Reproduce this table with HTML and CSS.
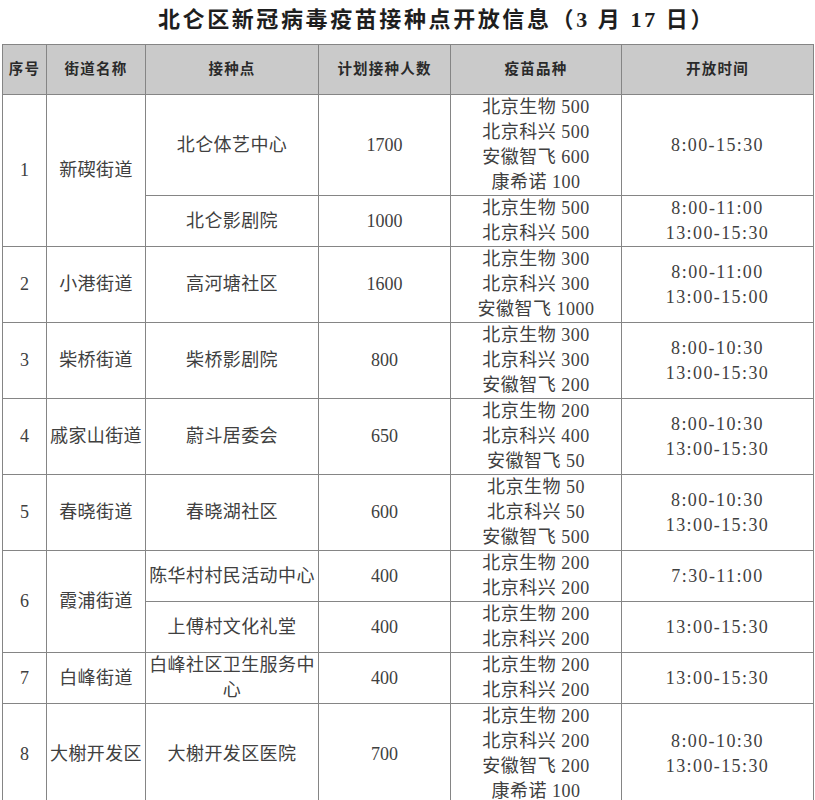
FILE: index.html
```html
<!DOCTYPE html>
<html lang="zh-CN">
<head>
<meta charset="utf-8">
<title>北仑区新冠病毒疫苗接种点开放信息</title>
<link rel="stylesheet" href="styles.css">
</head>
<body>
<h1 class="title">北仑区新冠病毒疫苗接种点开放信息（3 月 17 日）</h1>
<table class="sched">
  <colgroup>
    <col class="c-no"><col class="c-street"><col class="c-site"><col class="c-count"><col class="c-vac"><col class="c-time">
  </colgroup>
  <thead>
    <tr><th>序号</th><th>街道名称</th><th>接种点</th><th>计划接种人数</th><th>疫苗品种</th><th>开放时间</th></tr>
  </thead>
  <tbody>
    <tr>
      <td class="num" rowspan="2">1</td><td class="cjk" rowspan="2">新碶街道</td>
      <td class="cjk">北仑体艺中心</td><td class="num">1700</td>
      <td class="vac">北京生物 500<br>北京科兴 500<br>安徽智飞 600<br>康希诺 100</td>
      <td class="time">8:00-15:30</td>
    </tr>
    <tr>
      <td class="cjk">北仑影剧院</td><td class="num">1000</td>
      <td class="vac">北京生物 500<br>北京科兴 500</td>
      <td class="time">8:00-11:00<br>13:00-15:30</td>
    </tr>
    <tr>
      <td class="num">2</td><td class="cjk">小港街道</td>
      <td class="cjk">高河塘社区</td><td class="num">1600</td>
      <td class="vac">北京生物 300<br>北京科兴 300<br>安徽智飞 1000</td>
      <td class="time">8:00-11:00<br>13:00-15:00</td>
    </tr>
    <tr>
      <td class="num">3</td><td class="cjk">柴桥街道</td>
      <td class="cjk">柴桥影剧院</td><td class="num">800</td>
      <td class="vac">北京生物 300<br>北京科兴 300<br>安徽智飞 200</td>
      <td class="time">8:00-10:30<br>13:00-15:30</td>
    </tr>
    <tr>
      <td class="num">4</td><td class="cjk">戚家山街道</td>
      <td class="cjk">蔚斗居委会</td><td class="num">650</td>
      <td class="vac">北京生物 200<br>北京科兴 400<br>安徽智飞 50</td>
      <td class="time">8:00-10:30<br>13:00-15:30</td>
    </tr>
    <tr>
      <td class="num">5</td><td class="cjk">春晓街道</td>
      <td class="cjk">春晓湖社区</td><td class="num">600</td>
      <td class="vac">北京生物 50<br>北京科兴 50<br>安徽智飞 500</td>
      <td class="time">8:00-10:30<br>13:00-15:30</td>
    </tr>
    <tr>
      <td class="num" rowspan="2">6</td><td class="cjk" rowspan="2">霞浦街道</td>
      <td class="cjk">陈华村村民活动中心</td><td class="num">400</td>
      <td class="vac">北京生物 200<br>北京科兴 200</td>
      <td class="time">7:30-11:00</td>
    </tr>
    <tr>
      <td class="cjk">上傅村文化礼堂</td><td class="num">400</td>
      <td class="vac">北京生物 200<br>北京科兴 200</td>
      <td class="time">13:00-15:30</td>
    </tr>
    <tr>
      <td class="num">7</td><td class="cjk">白峰街道</td>
      <td class="cjk">白峰社区卫生服务中心</td><td class="num">400</td>
      <td class="vac">北京生物 200<br>北京科兴 200</td>
      <td class="time">13:00-15:30</td>
    </tr>
    <tr>
      <td class="num">8</td><td class="cjk">大榭开发区</td>
      <td class="cjk">大榭开发区医院</td><td class="num">700</td>
      <td class="vac">北京生物 200<br>北京科兴 200<br>安徽智飞 200<br>康希诺 100</td>
      <td class="time">8:00-10:30<br>13:00-15:30</td>
    </tr>
  </tbody>
</table>
</body>
</html>
```
FILE: styles.css
```css
html, body {
  margin: 0;
  padding: 0;
  background: #ffffff;
}

body {
  font-family: "Liberation Serif", "Noto Sans CJK SC", serif;
  color: #404040;
}

.title {
  margin: 0;
  height: 44px;
  padding-left: 58px;
  box-sizing: border-box;
  text-align: center;
  font-size: 22px;
  line-height: 40px;
  font-weight: bold;
  letter-spacing: 2.6px;
  color: #1e1e1e;
}

.sched {
  margin-left: 2px;
  width: 811px;
  table-layout: fixed;
  border-collapse: collapse;
}

.c-no { width: 44px; }
.c-street { width: 99px; }
.c-site { width: 173px; }
.c-count { width: 132px; }
.c-vac { width: 171px; }
.c-time { width: 192px; }

.sched th,
.sched td {
  border: 1px solid #858585;
  padding: 0 1px;
  text-align: center;
  vertical-align: middle;
  line-height: 25px;
  font-size: 18px;
  font-weight: normal;
}

.sched th {
  height: 49px;
  background: #cacaca;
  font-size: 14.5px;
  font-weight: bold;
  letter-spacing: 1.2px;
  color: #2a2a2a;
}

.sched td {
  height: 50px;
}

.sched td.cjk {
  letter-spacing: 0.4px;
}

.sched td.vac {
  letter-spacing: 0.5px;
}

.sched td.time {
  letter-spacing: 1.4px;
}

.sched td.num {
  letter-spacing: 0;
}
```
